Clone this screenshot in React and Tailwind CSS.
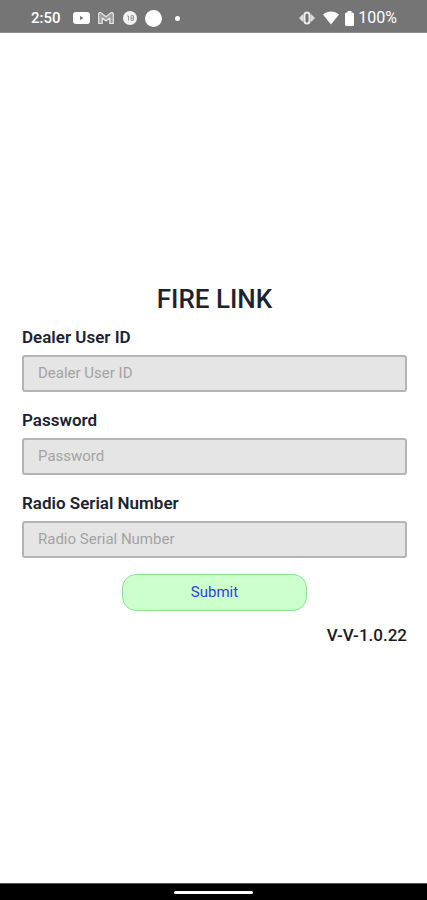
import { useState } from "react";

const fields = [
  { id: "dealerUserId", label: "Dealer User ID", type: "text" },
  { id: "password", label: "Password", type: "password" },
  { id: "radioSerial", label: "Radio Serial Number", type: "text" },
];

const StatusBar = () => (
  <header className="flex h-[33px] items-center justify-between border-b border-[#8c8c8c] bg-[#757575] pt-1 pr-[30px] pl-[31px] text-white">
    <div className="flex items-center">
      <span className="text-[15px] leading-5 font-medium">2:50</span>

      {/* YouTube */}
      <svg className="ml-3 h-3 w-[17px]" viewBox="0 0 17 12">
        <rect width="17" height="12" rx="3" fill="#fff" />
        <path d="M7 4v4L10.500 6z" fill="#757575" />
      </svg>

      {/* Gmail */}
      <svg className="ml-2 h-3 w-4" viewBox="0 0 16 12">
        <path
          d="M.7 11.500V1.500Q1.500 0 3 .8L8 4.800 13 .8Q14.500 0 15.300 1.500V11.500H11.800V6L8 9 4.200 6V11.500z"
          fill="#a0a0a0"
          stroke="#e6e6e6"
          strokeWidth="1.200"
          strokeLinejoin="round"
        />
      </svg>

      {/* Round app badge */}
      <svg className="ml-[9px] size-[14px]" viewBox="0 0 14 14">
        <circle cx="7" cy="7" r="7" fill="#f2f2f2" />
        <path
          d="M4 5h1.500v4.500M8 4.700h2.500v4.600H8zM8 7h2.500"
          fill="none"
          stroke="#9a9a9a"
          strokeWidth="1"
        />
      </svg>

      <span className="ml-2 size-[17px] rounded-full bg-white" />
      <span className="ml-[13px] size-[5px] rounded-full bg-white" />
    </div>

    <div className="flex items-center">
      {/* Vibrate */}
      <svg className="h-[14px] w-4" viewBox="0 0 16 14">
        <path d="M0 7l3.500-3.500h1v7h-1zM16 7l-3.500-3.500h-1v7h1z" fill="#dedede" />
        <rect
          x="5.500"
          y="1.500"
          width="5"
          height="11"
          rx="2.500"
          fill="#757575"
          stroke="#ececec"
          strokeWidth="2"
        />
      </svg>

      {/* Wifi */}
      <svg className="ml-2 h-[14px] w-4" viewBox="0 0 16 14">
        <path d="M0 3.500C4.500-.6 11.500-.6 16 3.500L8 13.500z" fill="#fff" />
      </svg>

      {/* Battery */}
      <svg className="ml-[6px] h-[15px] w-[9px]" viewBox="0 0 9 15">
        <path
          d="M2.500 0h4v1.500h1a1.500 1.500 0 0 1 1.500 1.500v10.500a1.500 1.500 0 0 1-1.500 1.500h-6a1.500 1.500 0 0 1-1.500-1.500V3a1.500 1.500 0 0 1 1.500-1.500h1z"
          fill="#fff"
        />
      </svg>
      <span className="ml-1 text-base leading-5">100%</span>
    </div>
  </header>
);

const Field = ({ id, label, type, value, onChange }) => (
  <div className="flex flex-col gap-[6px]">
    <label htmlFor={id} className="text-[17px] leading-6 font-semibold text-[#1d2233]">
      {label}
    </label>
    <input
      id={id}
      type={type}
      placeholder={label}
      value={value}
      onChange={onChange}
      className="h-[37px] w-full rounded-[3px] border-2 border-[#b4b4b4] bg-[#e5e5e5] px-[14px] pb-[2px] text-[15px] text-[#1d2233] placeholder:text-[#a3a3a3]"
    />
  </div>
);

const App = () => {
  const [values, setValues] = useState({
    dealerUserId: "",
    password: "",
    radioSerial: "",
  });

  const handleChange = (id) => (e) => setValues({ ...values, [id]: e.target.value });

  return (
    <div className="flex min-h-screen flex-col bg-white font-['Roboto',sans-serif]">
      <StatusBar />

      <main className="flex flex-1 flex-col justify-center pt-[14px] pr-5 pl-[22px]">
        <h1 className="mb-[10px] text-center text-[26px] leading-8 font-medium text-[#1d2233]">
          FIRE LINK
        </h1>

        <form className="flex flex-col gap-4" onSubmit={(e) => e.preventDefault()}>
          {fields.map((field) => (
            <Field
              key={field.id}
              {...field}
              value={values[field.id]}
              onChange={handleChange(field.id)}
            />
          ))}
          <button
            type="submit"
            className="h-[37px] w-[185px] self-center rounded-[14px] border border-[#8fe08f] bg-[#ccffcc] text-[15px] text-[#2f3fe0]"
          >
            Submit
          </button>
        </form>

        <p className="mt-3 text-right text-[17px] leading-6 font-medium text-[#1a1a1a]">
          V-V-1.0.22
        </p>
      </main>

      {/* Gesture bar */}
      <footer className="flex h-[17px] items-center justify-center border-t border-[#555] bg-black">
        <span className="h-[3px] w-[79px] rounded-full bg-white" />
      </footer>
    </div>
  );
};

export default App;
